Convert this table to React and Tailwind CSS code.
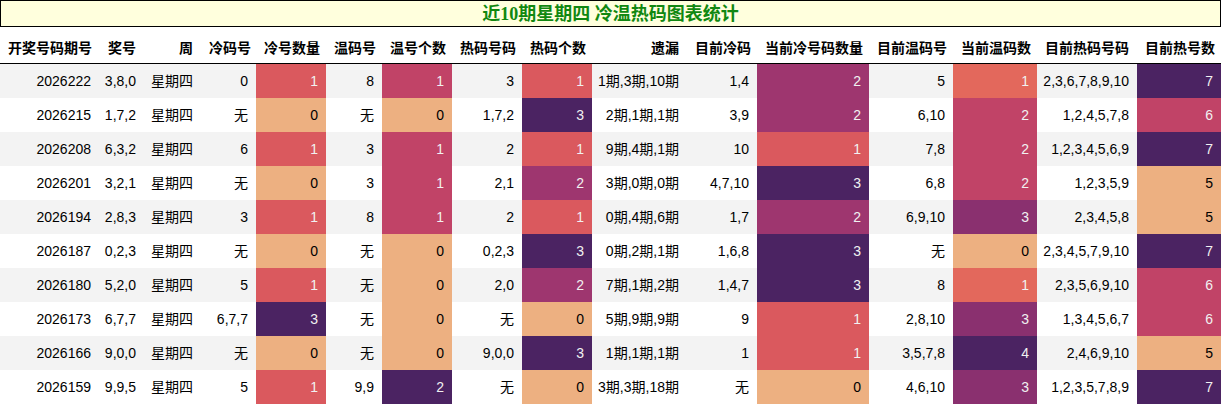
import React from "react";

const cols = [
  "开奖号码期号",
  "奖号",
  "周",
  "冷码号",
  "冷号数量",
  "温码号",
  "温号个数",
  "热码号码",
  "热码个数",
  "遗漏",
  "目前冷码",
  "当前冷号码数量",
  "目前温码号",
  "当前温码数",
  "目前热码号码",
  "目前热号数",
];

const rows = [
  ["2026222", "3,8,0", "星期四", "0", 1, "8", 1, "3", 1, "1期,3期,10期", "1,4", 2, "5", 1, "2,3,6,7,8,9,10", 7],
  ["2026215", "1,7,2", "星期四", "无", 0, "无", 0, "1,7,2", 3, "2期,1期,1期", "3,9", 2, "6,10", 2, "1,2,4,5,7,8", 6],
  ["2026208", "6,3,2", "星期四", "6", 1, "3", 1, "2", 1, "9期,4期,1期", "10", 1, "7,8", 2, "1,2,3,4,5,6,9", 7],
  ["2026201", "3,2,1", "星期四", "无", 0, "3", 1, "2,1", 2, "3期,0期,0期", "4,7,10", 3, "6,8", 2, "1,2,3,5,9", 5],
  ["2026194", "2,8,3", "星期四", "3", 1, "8", 1, "2", 1, "0期,4期,6期", "1,7", 2, "6,9,10", 3, "2,3,4,5,8", 5],
  ["2026187", "0,2,3", "星期四", "无", 0, "无", 0, "0,2,3", 3, "0期,2期,1期", "1,6,8", 3, "无", 0, "2,3,4,5,7,9,10", 7],
  ["2026180", "5,2,0", "星期四", "5", 1, "无", 0, "2,0", 2, "7期,1期,2期", "1,4,7", 3, "8", 1, "2,3,5,6,9,10", 6],
  ["2026173", "6,7,7", "星期四", "6,7,7", 3, "无", 0, "无", 0, "5期,9期,9期", "9", 1, "2,8,10", 3, "1,3,4,5,6,7", 6],
  ["2026166", "9,0,0", "星期四", "无", 0, "无", 0, "9,0,0", 3, "1期,1期,1期", "1", 1, "3,5,7,8", 4, "2,4,6,9,10", 5],
  ["2026159", "9,9,5", "星期四", "5", 1, "9,9", 2, "无", 0, "3期,3期,18期", "无", 0, "4,6,10", 3, "1,2,3,5,7,8,9", 7],
];

// columns coloured by value (seaborn "flare" gradient per column)
const gradientCols = [4, 6, 8, 11, 13, 15];

const flare = [
  [0, "bg-[#edb081] text-black"],
  [0.25, "bg-[#e3685c] text-[#f1f1f1]"],
  [0.34, "bg-[#da595e] text-[#f1f1f1]"],
  [0.5, "bg-[#c14367] text-[#f1f1f1]"],
  [0.67, "bg-[#9e366f] text-[#f1f1f1]"],
  [0.75, "bg-[#8a306f] text-[#f1f1f1]"],
  [1, "bg-[#4b2362] text-[#f1f1f1]"],
];

const colorFor = (ci, v) => {
  const vals = rows.map((r) => r[ci]);
  const min = Math.min(...vals);
  const max = Math.max(...vals);
  const t = max === min ? 0 : (v - min) / (max - min);
  let best = flare[0];
  flare.forEach((s) => {
    if (Math.abs(s[0] - t) < Math.abs(best[0] - t)) best = s;
  });
  return best[1];
};

const grid =
  "grid grid-cols-[99px_45px_57px_55px_70px_56px_70px_70px_70px_95px_70px_112px_84px_84px_100px_84px]";

const App = () => {
  return (
    <div
      className="w-[1221px] bg-white text-[14px] text-black"
      style={{ fontFamily: '"Liberation Sans", "Noto Sans CJK SC", sans-serif' }}
    >
      {/* Title */}
      <div className="h-[27px] border border-black bg-[#ffffdd] flex items-center justify-center pt-[1px]">
        <h1
          className="text-[18px] font-bold text-[#118811] leading-none"
          style={{ fontFamily: '"Liberation Serif", "Noto Sans CJK SC", serif' }}
        >
          近10期星期四 冷温热码图表统计
        </h1>
      </div>

      {/* Header */}
      <div className={`${grid} h-[37px] border-b border-black font-bold`}>
        {cols.map((c) => (
          <div key={c} className="px-2 pt-[11px] text-right leading-5 whitespace-nowrap">
            {c}
          </div>
        ))}
      </div>

      {/* Rows */}
      {rows.map((row, ri) => (
        <div
          key={row[0]}
          className={`${grid} h-[34px] ${ri % 2 === 0 ? "bg-[#f3f3f3]" : "bg-white"}`}
        >
          {row.map((cell, ci) => (
            <div
              key={ci}
              className={`px-2 flex items-center justify-end leading-5 whitespace-nowrap ${
                gradientCols.includes(ci) ? colorFor(ci, cell) : "text-black"
              }`}
            >
              {cell}
            </div>
          ))}
        </div>
      ))}
    </div>
  );
};

export default App;
